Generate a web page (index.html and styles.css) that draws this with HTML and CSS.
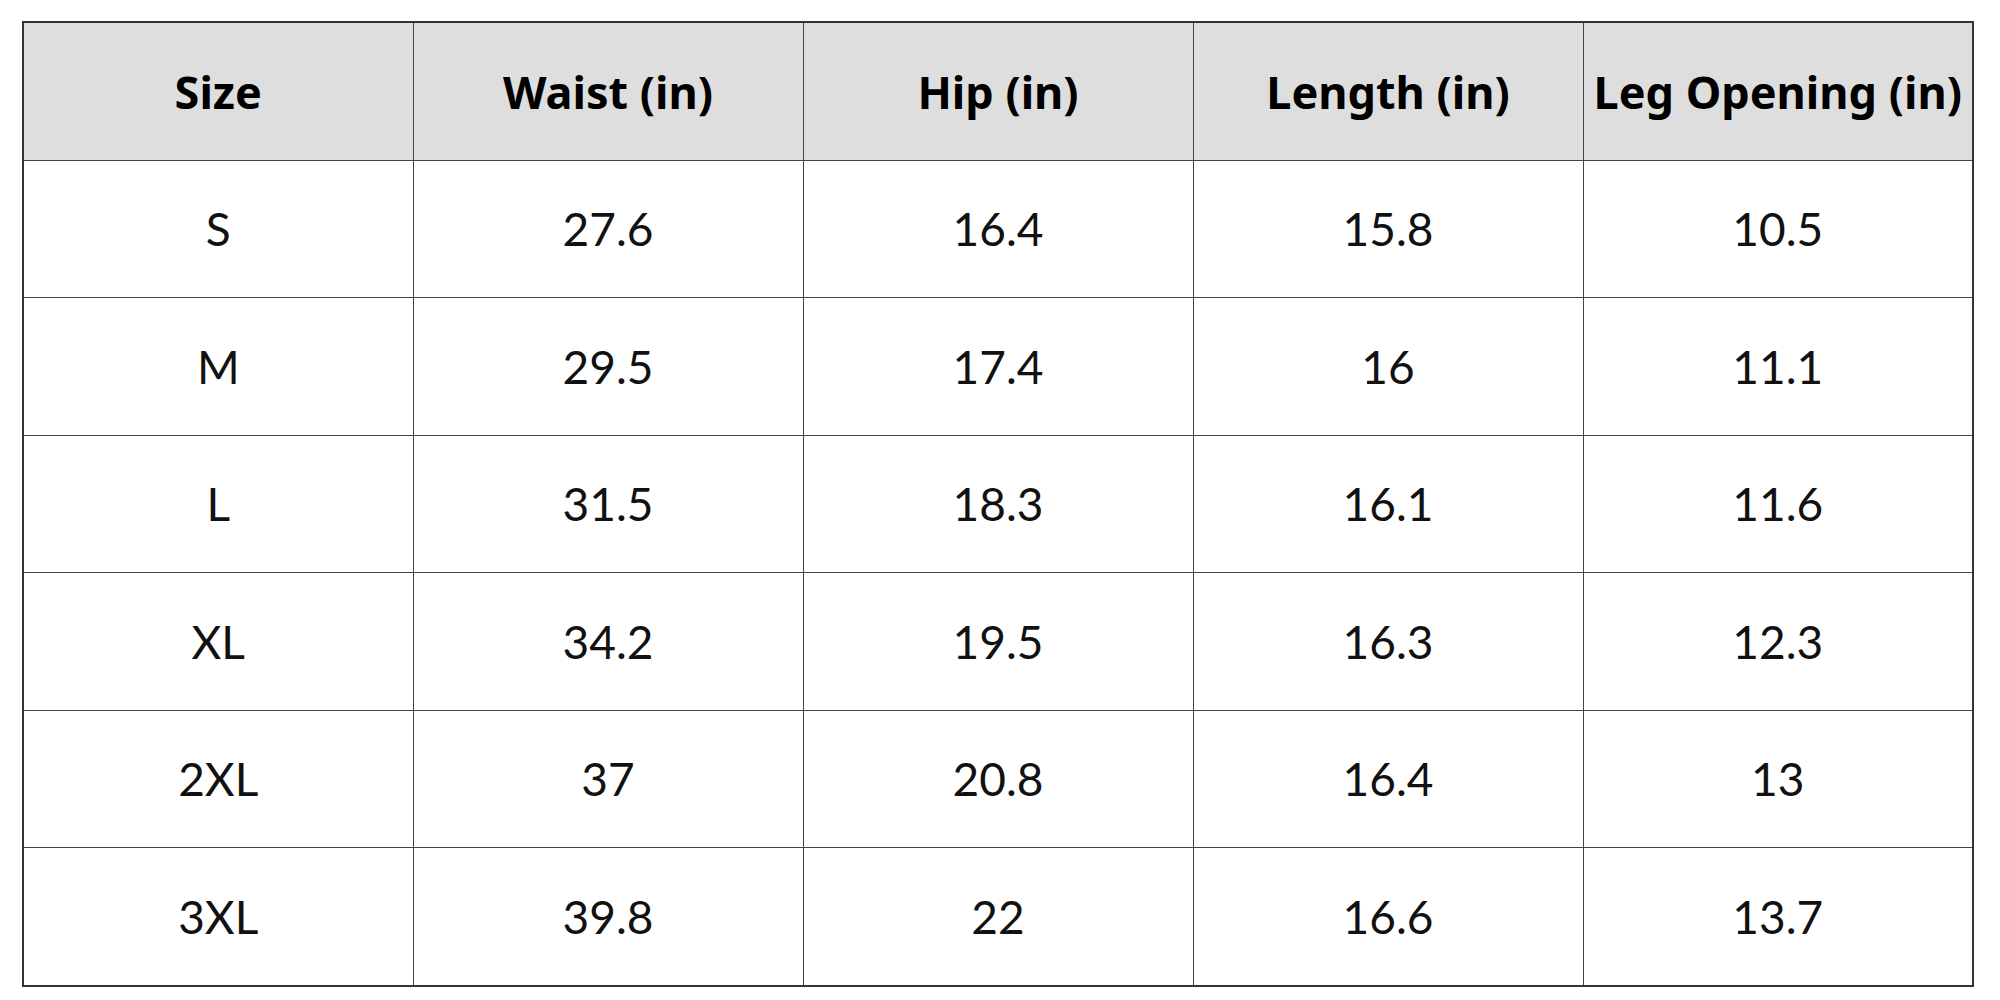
FILE: index.html
```html
<!DOCTYPE html>
<html>
<head>
<meta charset="utf-8">
<link rel="stylesheet" href="styles.css">
</head>
<body>
<table class="size-table">
  <thead>
    <tr><th>Size</th><th>Waist (in)</th><th>Hip (in)</th><th>Length (in)</th><th>Leg Opening (in)</th></tr>
  </thead>
  <tbody>
    <tr><td>S</td><td>27.6</td><td>16.4</td><td>15.8</td><td>10.5</td></tr>
    <tr><td>M</td><td>29.5</td><td>17.4</td><td>16</td><td>11.1</td></tr>
    <tr><td>L</td><td>31.5</td><td>18.3</td><td>16.1</td><td>11.6</td></tr>
    <tr><td>XL</td><td>34.2</td><td>19.5</td><td>16.3</td><td>12.3</td></tr>
    <tr><td>2XL</td><td>37</td><td>20.8</td><td>16.4</td><td>13</td></tr>
    <tr><td>3XL</td><td>39.8</td><td>22</td><td>16.6</td><td>13.7</td></tr>
  </tbody>
</table>
</body>
</html>
```
FILE: styles.css
```css
html, body {
  margin: 0;
  padding: 0;
  background: #ffffff;
}
body {
  padding: 21px 0 0 22px;
}
.size-table {
  border-collapse: collapse;
  table-layout: fixed;
  width: 1952px;
  border: 2px solid #333333;
}
.size-table th,
.size-table td {
  border: 1px solid #444444;
  height: 136.5px;
  padding: 0;
  text-align: center;
  vertical-align: middle;
  white-space: nowrap;
}
.size-table th {
  background: #dedede;
  font-family: "Noto Sans", "Open Sans", sans-serif;
  font-weight: 700;
  font-size: 45px;
  color: #000000;
}
.size-table td {
  font-family: Lato, "Noto Sans", sans-serif;
  font-weight: 400;
  font-size: 46px;
  color: #111111;
}
```
